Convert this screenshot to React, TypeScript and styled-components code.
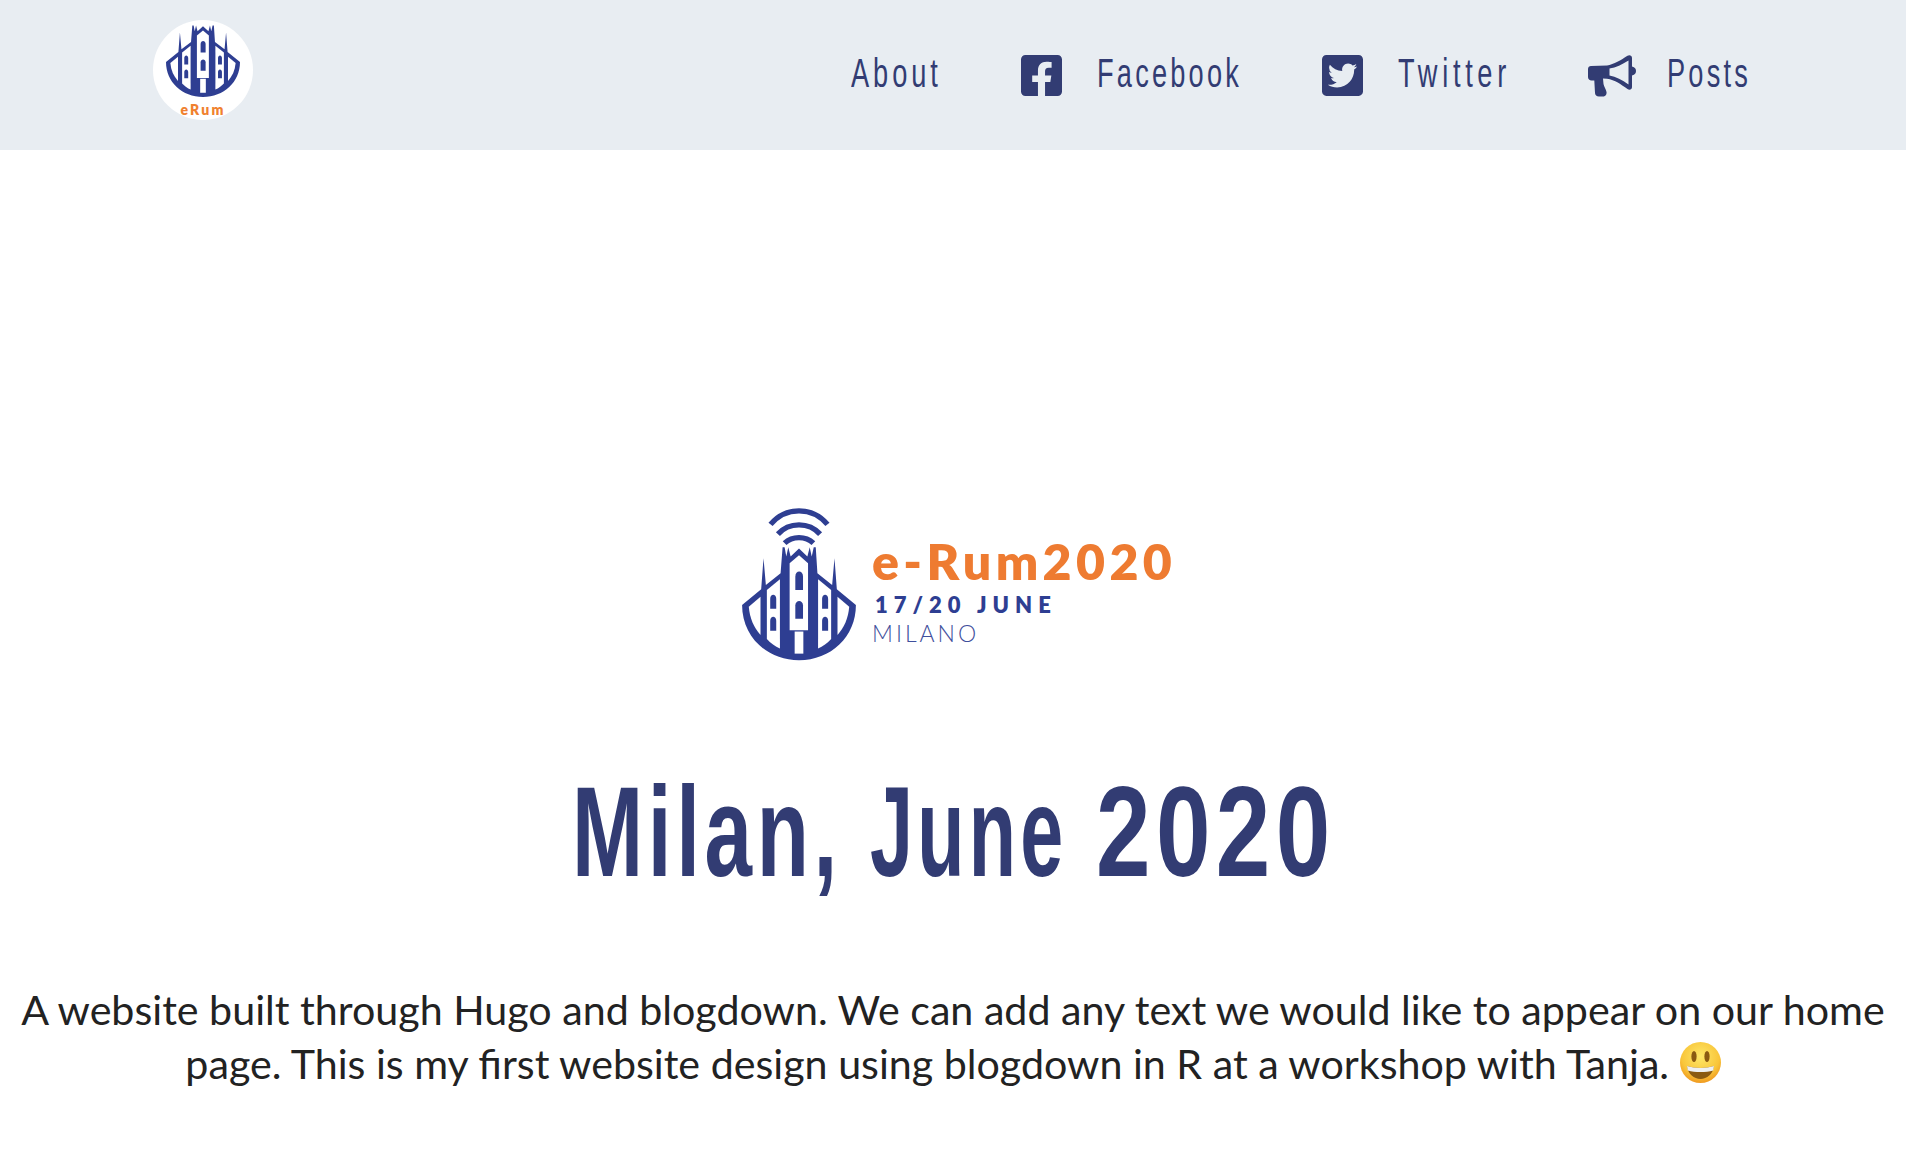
import React from "react";
import styled, { createGlobalStyle } from "styled-components";
import { FaFacebookSquare, FaTwitterSquare } from "react-icons/fa";

const Global = createGlobalStyle`
  html, body { margin: 0; padding: 0; background: #fff; }
  body { font-family: "Lato", "Liberation Sans", sans-serif; color: #222; }
`;

const NAVY = "#323c73";
const COND = `"Liberation Sans", Arial, sans-serif`;

const Header = styled.header`
  height: 150px;
  background: #e8edf2;
  display: flex;
  align-items: center;
  justify-content: space-between;
  padding: 0 156px 0 153px;
`;
const Badge = styled.a`
  width: 100px;
  height: 100px;
  margin-top: -10px;
  border-radius: 50%;
  background: #fff;
  display: flex;
  flex-direction: column;
  align-items: center;
  padding-top: 5px;
  box-sizing: border-box;
`;
const BadgeMark = styled.svg`
  width: 74px;
  height: 72px;
  margin-bottom: 6px;
`;
const BadgeText = styled.span`
  font: 800 14px/14px "Lato", sans-serif;
  letter-spacing: 2.2px;
  color: #f0812f;
`;
const Nav = styled.nav`
  display: flex;
  align-items: center;
  gap: 80px;
  height: 50px;
  margin-top: -4px;
`;
const NavItem = styled.a<{ $gap?: number }>`
  display: flex;
  align-items: center;
  gap: ${(p) => p.$gap ?? 35}px;
  color: ${NAVY};
  svg { width: 41px; height: 47px; flex: none; margin-top: 4px; }
`;
const Horn = styled.svg`
  && { width: 48px; height: 42px; margin-top: 6px; }
`;
const NavLabel = styled.span<{ $w: number; $ls: number }>`
  display: block;
  width: ${(p) => p.$w}px;
  font-family: ${COND};
  font-size: 40px;
  line-height: 50px;
  letter-spacing: ${(p) => p.$ls}px;
  white-space: nowrap;
  transform: scaleX(0.68);
  transform-origin: left center;
`;

const Main = styled.main`
  display: flex;
  flex-direction: column;
  align-items: center;
  padding: 358px 16px 0;
`;
const Lockup = styled.div`
  display: flex;
  align-items: flex-start;
  gap: 16px;
  height: 152px;
  width: 430px;
  margin-left: 8px;
`;
const Mark = styled.svg`
  width: 114px;
  height: 153px;
  flex: none;
`;
const LockupText = styled.div`
  display: flex;
  flex-direction: column;
  padding-top: 28px;
`;
const Brand = styled.div`
  font: 800 50px/50px "Lato", sans-serif;
  letter-spacing: 4.4px;
  color: #ee7b31;
  white-space: nowrap;
`;
const Dates = styled.div`
  font: 800 22px/26px "Lato", sans-serif;
  letter-spacing: 6px;
  color: #2e3e92;
  white-space: nowrap;
  padding: 6px 0 0 3px;
`;
const City = styled.div`
  font: 300 23px/30px "Lato", sans-serif;
  letter-spacing: 3px;
  color: #3f4f9c;
`;
const Title = styled.h1`
  margin: 102px 0 0;
  padding-right: 7px;
  color: ${NAVY};
  font-family: ${COND};
  font-weight: 700;
  font-size: 128px;
  line-height: 140px;
  letter-spacing: 7px;
  display: flex;
  gap: 36px;
  justify-content: center;
  white-space: nowrap;
`;
const Word = styled.span<{ $w: number; $sx: number }>`
  display: block;
  width: ${(p) => p.$w}px;
  transform: scaleX(${(p) => p.$sx});
  transform-origin: left center;
`;
const Lead = styled.p`
  margin: 81px 0 0;
  font: 400 41.2px/53.5px "Lato", sans-serif;
  color: #222;
  text-align: center;
`;
const Smile = styled.svg`
  width: 41px;
  height: 41px;
  vertical-align: -4px;
`;

const Cathedral = ({ wifi }: { wifi?: boolean }) => (
  <>
    {wifi && (
      <g fill="none" stroke="#2e3e92" strokeWidth="16">
        <path d="M150 104 C195 50 275 50 320 104" />
        <path d="M172 133 C205 96 265 96 298 133" />
        <path d="M192 160 C215 138 255 138 278 160" />
      </g>
    )}
    <path
      fill="#2e3e92"
      d="M65 345 L122 298 L129 205 L136 285 L180 250 L186 172 L192 172 L197 200 L203 172 L210 200 L235 176 L260 200 L267 172 L273 200 L279 172 L285 172 L290 250 L334 285 L341 205 L348 298 L405 345 C405 440 330 510 235 510 C140 510 65 440 65 345 Z"
    />
    <g fill="#fff">
      <path d="M85 350 L120 320 L120 434 C100 412 88 385 85 350 Z" />
      <path d="M139 300 L178 268 L178 475 C164 468 150 458 139 446 Z" />
      <path d="M350 320 L385 350 C382 385 370 412 350 434 Z" />
      <path d="M331 300 L292 268 L292 475 C306 468 320 458 331 446 Z" />
      <path d="M207 220 L235 196 L262 220 L262 420 L207 420 Z" />
      <path d="M222 424 L248 424 L248 490 L222 490 Z" />
    </g>
    <g fill="#2e3e92">
      <path d="M224 300 L224 260 C224 240 247 240 247 260 L247 300 Z" />
      <path d="M224 386 L224 346 C224 328 247 328 247 346 L247 386 Z" />
      <path d="M149 356 L149 326 C149 310 167 310 167 326 L167 356 Z" />
      <path d="M149 422 L149 392 C149 376 167 376 167 392 L167 422 Z" />
      <path d="M304 356 L304 326 C304 310 322 310 322 326 L322 356 Z" />
      <path d="M304 422 L304 392 C304 376 322 376 322 392 L322 422 Z" />
    </g>
  </>
);

export default function App() {
  return (
    <>
      <Global />
      <Header>
        <Badge>
          <BadgeMark viewBox="65 170 340 340" preserveAspectRatio="none">
            <Cathedral />
          </BadgeMark>
          <BadgeText>eRum</BadgeText>
        </Badge>
        <Nav>
          <NavItem>
            <NavLabel $w={90} $ls={5.8}>About</NavLabel>
          </NavItem>
          <NavItem>
            <FaFacebookSquare />
            <NavLabel $w={145} $ls={4.7}>Facebook</NavLabel>
          </NavItem>
          <NavItem>
            <FaTwitterSquare />
            <NavLabel $w={110} $ls={6.9}>Twitter</NavLabel>
          </NavItem>
          <NavItem $gap={31}>
            <Horn viewBox="0 0 48 42">
              <path
                fill={NAVY}
                fillRule="evenodd"
                d="M3 11 L19 10.5 C26 9.5 33 5 39.5 0.8 C41.5 -0.4 44 0.5 44 3 L44 11.5 C47 12 48 14 48 16 C48 18 47 20 44 20.5 L44 32 C44 34.5 41.5 35.5 39.5 34 C33 29.5 27 25 19 23.8 L15 23.6 L15.5 29 C16 32 18 34 18.5 37 C19 40 17 41.5 14 41.5 L11 41.5 C8.5 41.5 7.2 40 7 38 L6.3 25.5 L3.5 25.5 C1.5 25.5 0 24 0 22 L0 14 C0 12.3 1.3 11 3 11 Z M21.5 13.5 L21.5 20.5 C28 21.5 34 25 40.5 29.5 L40.5 5.5 C34 9.5 28 12.5 21.5 13.5 Z"
              />
            </Horn>
            <NavLabel $w={83} $ls={4.7}>Posts</NavLabel>
          </NavItem>
        </Nav>
      </Header>
      <Main>
        <Lockup>
          <Mark viewBox="65 55 340 457">
            <Cathedral wifi />
          </Mark>
          <LockupText>
            <Brand>e-Rum2020</Brand>
            <Dates>17/20 JUNE</Dates>
            <City>MILANO</City>
          </LockupText>
        </Lockup>
        <Title>
          <Word $w={262} $sx={0.667}>Milan,</Word>
          <Word $w={190} $sx={0.604}>June</Word>
          <Word $w={231} $sx={0.766}>2020</Word>
        </Title>
        <Lead>
          A website built through Hugo and blogdown. We can add any text we would like to appear on our home page. This is my first website design using blogdown in R at a workshop with Tanja.{" "}
          <Smile viewBox="0 0 41 41">
            <defs>
              <radialGradient id="face" cx="50%" cy="35%" r="65%">
                <stop offset="0%" stopColor="#fde768" />
                <stop offset="70%" stopColor="#f9c63a" />
                <stop offset="100%" stopColor="#f09a20" />
              </radialGradient>
            </defs>
            <circle cx="20.5" cy="20.5" r="20.5" fill="url(#face)" />
            <ellipse cx="14" cy="14.5" rx="2.6" ry="5.6" fill="#8a5a12" />
            <ellipse cx="27" cy="14.5" rx="2.6" ry="5.6" fill="#8a5a12" />
            <path d="M7 24 C15 26.5 26 26.5 34 24 C33 32 27 37 20.5 37 C14 37 8 32 7 24 Z" fill="#8a5a12" />
            <path d="M7 24 C15 26.5 26 26.5 34 24 L33.2 28.5 C26 30.5 15 30.5 7.8 28.5 Z" fill="#eef0f2" />
          </Smile>
        </Lead>
      </Main>
    </>
  );
}
